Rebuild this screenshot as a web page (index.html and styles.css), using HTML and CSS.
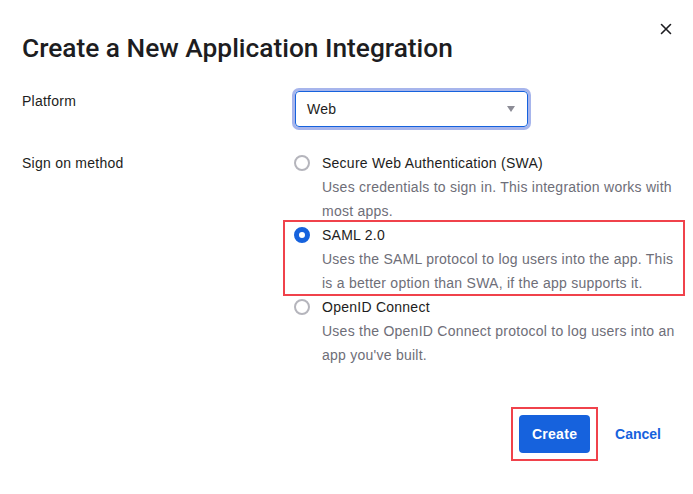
FILE: index.html
```html
<!DOCTYPE html>
<html>
<head>
<meta charset="utf-8">
<link rel="stylesheet" href="styles.css">
</head>
<body>
<div class="dialog">
  <div class="header">
    <h1 class="title">Create a New Application Integration</h1>
    <button class="close" aria-label="Close">
      <svg width="12" height="12" viewBox="0 0 12 12"><path d="M1.5 1.5 L10.5 10.5 M10.5 1.5 L1.5 10.5" stroke="#1d1d21" stroke-width="1.6" stroke-linecap="round"/></svg>
    </button>
  </div>
  <div class="row row-platform">
    <div class="label">Platform</div>
    <div class="control">
      <div class="select">
        <span>Web</span>
        <span class="arrow"></span>
      </div>
    </div>
  </div>
  <div class="row row-sign">
    <div class="label">Sign on method</div>
    <div class="control options">
      <div class="option">
        <span class="radio"></span>
        <div class="opt-text">
          <div class="opt-label">Secure Web Authentication (SWA)</div>
          <div class="opt-desc">Uses credentials to sign in. This integration works with most apps.</div>
        </div>
      </div>
      <div class="option selected">
        <span class="radio checked"></span>
        <div class="opt-text">
          <div class="opt-label">SAML 2.0</div>
          <div class="opt-desc">Uses the SAML protocol to log users into the app. This is a better option than SWA, if the app supports it.</div>
        </div>
      </div>
      <div class="option">
        <span class="radio"></span>
        <div class="opt-text">
          <div class="opt-label">OpenID Connect</div>
          <div class="opt-desc">Uses the OpenID Connect protocol to log users into an app you've built.</div>
        </div>
      </div>
    </div>
  </div>
  <div class="footer">
    <div class="create-wrap"><button class="btn-create">Create</button></div>
    <button class="btn-cancel">Cancel</button>
  </div>
</div>
</body>
</html>
```
FILE: styles.css
```css
* { box-sizing: border-box; }
html, body { margin: 0; padding: 0; background: #fff; }
body {
  font-family: "Liberation Sans", Arial, sans-serif;
  font-size: 14px;
  letter-spacing: 0.25px;
  color: #1d1d21;
  width: 693px;
  height: 494px;
  overflow: hidden;
}
.dialog { padding: 0 21px 0 22px; }
.header { display: flex; justify-content: space-between; align-items: flex-start; }
.title {
  margin: 32px 0 0 0;
  font-family: Roboto, "Liberation Sans", sans-serif;
  font-size: 26.3px;
  line-height: 32px;
  font-weight: 500;
  letter-spacing: 0;
  color: #1d1d21;
}
.close {
  margin-top: 23px;
  border: 0;
  background: none;
  padding: 0;
  width: 12px;
  height: 12px;
  display: flex;
}
.row { display: grid; grid-template-columns: 270px 1fr; }
.row-platform { margin-top: 24px; margin-bottom: 24px; }
.row-platform .label { padding-top: 1px; }
.label { line-height: 24px; }
.select {
  border: 1px solid #1662dd;
  box-shadow: 0 0 0 3px #a7b5ec;
  border-radius: 4px;
  margin: 3px 0 0 3px;
  display: flex;
  align-items: center;
  justify-content: space-between;
  padding: 0 12px 0 11px;
  width: 233px;
  height: 36px;
}
.arrow {
  width: 0; height: 0;
  border-left: 4px solid transparent;
  border-right: 4px solid transparent;
  border-top: 6px solid #8c8c96;
}
.options { display: flex; flex-direction: column; padding-left: 2px; }
.option { display: flex; gap: 12px; position: relative; line-height: 24px; margin-right: -6px; }
.option.selected::after {
  content: "";
  position: absolute;
  left: -11px; right: -7px; top: -3px; bottom: -1px;
  border: 2px solid #f0424b;
  pointer-events: none;
}
.radio {
  flex: none;
  width: 16px; height: 16px;
  border-radius: 50%;
  border: 2px solid #b5b5bc;
  margin-top: 4px;
  background: #fff;
}
.radio.checked { border: 5px solid #1662dd; }
.opt-text { flex: 1; }
.opt-label { color: #1d1d21; }
.opt-desc { color: #6e6e78; }
.footer {
  display: flex;
  justify-content: flex-end;
  align-items: center;
  margin-top: 40px;
  gap: 17px;
  padding-right: 11px;
}
.create-wrap { border: 2px solid #f0424b; padding: 6px; }
.btn-create {
  display: block;
  background: #1662dd;
  color: #fff;
  border: 0;
  border-radius: 4px;
  width: 71px;
  height: 38px;
  font: 700 14px "Liberation Sans", Arial, sans-serif;
  letter-spacing: 0.3px;
}
.btn-cancel {
  background: none;
  border: 0;
  padding: 0;
  color: #1662dd;
  font: 700 14px "Liberation Sans", Arial, sans-serif;
}
```
